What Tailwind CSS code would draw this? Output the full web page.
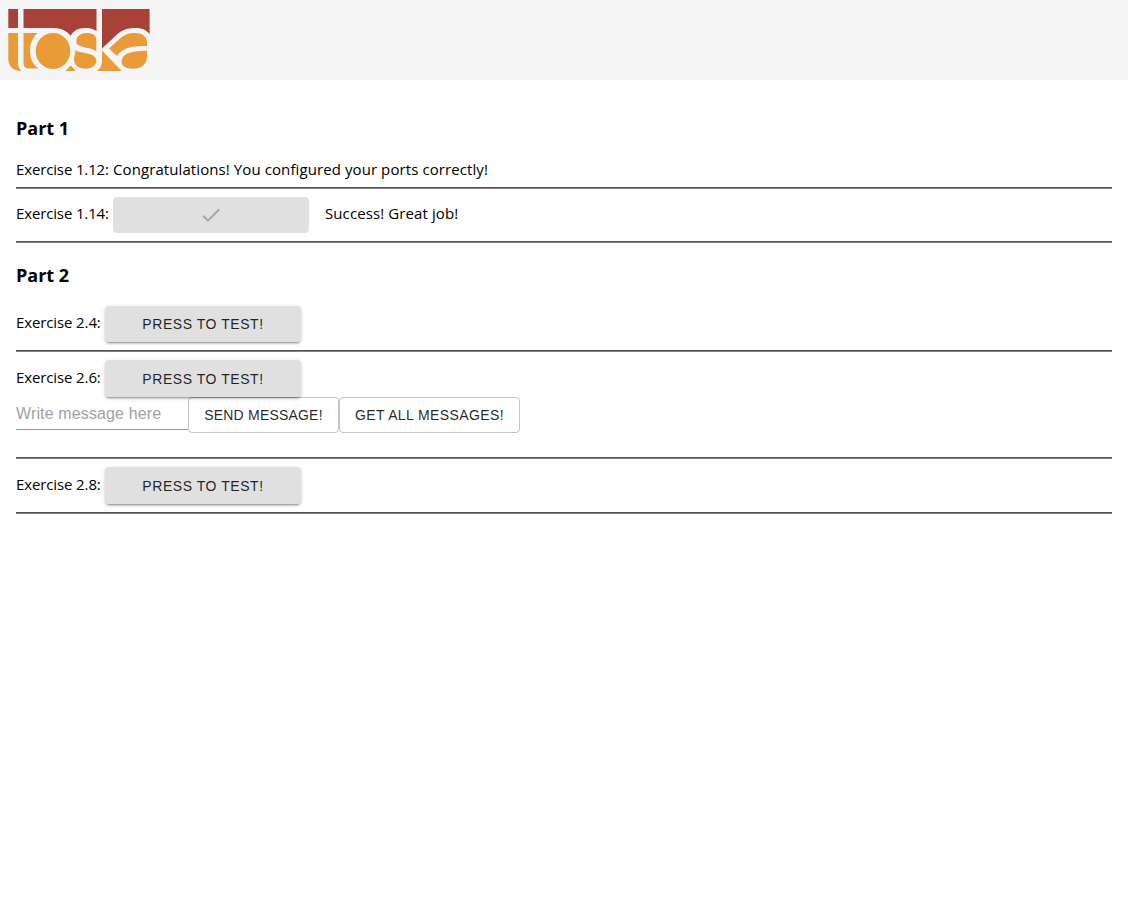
<!DOCTYPE html>
<html lang="en">
<head>
<meta charset="utf-8">
<title>Toska</title>
<script src="https://cdn.jsdelivr.net/npm/@tailwindcss/browser@4"></script>
</head>
<body class="bg-white text-black font-['Open_Sans',sans-serif] text-[15px] leading-[22px]">
<header class="h-20 bg-[#f5f5f5] pl-2 pt-2">
<svg class="block" width="144" height="64" viewBox="8 8 144 64">
<g fill="#a84238">
<path d="M8.3 9H18V28H8.3Z"/>
<path d="M23.5 9H96.5V31C93 28.5 89 28 85 28C78 28 73 31 70.7 35.7C67 31 61 28 54 28H23.5Z"/>
<path d="M102 9H149.6V34C146 29.500 141 28 136 28C127 28 122 30 117 34.500L102 48.500Z"/>
</g>
<g fill="#e99b38">
<path d="M8.300 33H18V62C18 66 19 69 21.500 71C13 71 8.300 66 8.300 59Z"/>
<path d="M23.500 33H37.500C32.500 37.500 30 44 30 51C30 58 33 65 38.500 68.500H29C25 68.500 23.500 66 23.500 63Z"/>
<ellipse cx="53" cy="51" rx="17.300" ry="18"/>
<path d="M65.500 71L70.800 65.500L75.500 71Z"/>
<path d="M76.300 42C76.300 36 81 33 86.500 33C92 33 95.500 35 96.300 39V51.500C92 47.500 84 48 79 45.500C77 44.500 76.300 43.500 76.300 42Z"/>
<path d="M75.500 50C80 54 96 52 96.300 60.500C96.300 66 91 68.700 86 68.700C78 68.700 74 65 74 59C74 56 75.500 53 75.500 50Z"/>
<path d="M102 50.500L121.700 71H96.500C100 69 102 65.500 102 61Z"/>
<path d="M109 48.500L120 38.500C125 34 130 33 135 33C143 33 147 37 147 43V46C134 46 123 46.500 117 56Z"/>
<path d="M147 50.700V56C147 65 141 68.700 133 68.700C125 68.700 121.300 65.500 121.500 61C122 54 131 50.500 147 50.700Z"/>
</g>
</svg>
</header>
<main class="px-4 pt-9">
<h3 class="h-[42px] text-[18px] leading-[24px] font-bold">Part 1</h3>
<section class="flex h-[31px] border-b border-[#808080] shadow-[inset_0_-1px_0_#545454]"><span class="w-[97px] tracking-[-0.14px] whitespace-nowrap">Exercise 1.12:</span><span class="tracking-[0.09px]">Congratulations! You configured your ports correctly!</span></section>
<section class="flex h-[54px] pt-2 border-b border-[#808080] shadow-[inset_0_-1px_0_#545454]">
<span class="w-[97px] pt-[5px] tracking-[-0.14px] whitespace-nowrap">Exercise 1.14:</span>
<button class="flex h-9 w-[196px] items-center justify-center rounded bg-[#e0e0e0]"><svg width="24" height="24" viewBox="0 0 24 24" fill="#a6a6a6"><path d="M9 16.170 4.830 12l-1.420 1.410L9 19 21 7l-1.410-1.410z"/></svg></button>
<span class="ml-4 pt-[5px] tracking-[0.1px]">Success! Great job!</span>
</section>
<h3 class="h-[55px] pt-5 text-[18px] leading-[24px] font-bold">Part 2</h3>
<section class="flex h-[54px] pt-2 border-b border-[#808080] shadow-[inset_0_-1px_0_#545454]">
<span class="w-[89px] pt-[5px] tracking-[-0.12px] whitespace-nowrap">Exercise 2.4:</span>
<button class="h-9 w-[196px] rounded bg-[#e0e0e0] font-['Liberation_Sans',sans-serif] text-[14px] tracking-[0.55px] text-black/87 shadow-[0_3px_1px_-2px_rgba(0,0,0,.2),0_2px_2px_0_rgba(0,0,0,.14),0_1px_5px_0_rgba(0,0,0,.12)]">PRESS TO TEST!</button>
</section>
<section class="h-[107px] pt-2 border-b border-[#808080] shadow-[inset_0_-1px_0_#545454]">
<div class="flex"><span class="w-[89px] pt-[6px] tracking-[-0.12px] whitespace-nowrap">Exercise 2.6:</span>
<button class="h-[37px] w-[196px] rounded bg-[#e0e0e0] font-['Liberation_Sans',sans-serif] text-[14px] tracking-[0.55px] text-black/87 shadow-[0_3px_1px_-2px_rgba(0,0,0,.2),0_2px_2px_0_rgba(0,0,0,.14),0_1px_5px_0_rgba(0,0,0,.12)]">PRESS TO TEST!</button></div>
<div class="flex font-['Liberation_Sans',sans-serif]">
<div class="h-[33px] w-[172px] border-b border-[#949494] pt-[6px] text-[16px] leading-[22px] tracking-[0.13px] text-[#a2a2a2]">Write message here</div>
<button class="h-9 w-[151px] rounded border border-black/23 text-[14px] tracking-[0.2px] text-black/87">SEND MESSAGE!</button>
<button class="h-9 w-[181px] rounded border border-black/23 text-[14px] tracking-[0.4px] text-black/87">GET ALL MESSAGES!</button>
</div>
</section>
<section class="flex h-[55px] pt-2 border-b border-[#808080] shadow-[inset_0_-1px_0_#545454]">
<span class="w-[89px] pt-[6px] tracking-[-0.12px] whitespace-nowrap">Exercise 2.8:</span>
<button class="h-[37px] w-[196px] rounded bg-[#e0e0e0] font-['Liberation_Sans',sans-serif] text-[14px] tracking-[0.55px] text-black/87 shadow-[0_3px_1px_-2px_rgba(0,0,0,.2),0_2px_2px_0_rgba(0,0,0,.14),0_1px_5px_0_rgba(0,0,0,.12)]">PRESS TO TEST!</button>
</section>
</main>
</body>
</html>
